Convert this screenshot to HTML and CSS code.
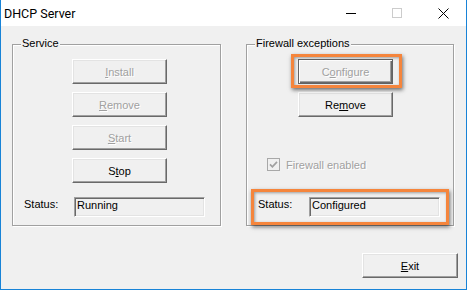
FILE: index.html
```html
<!DOCTYPE html>
<html lang="en">
<head>
    <meta charset="UTF-8">
    <title>DHCP Server</title>
    <link rel="stylesheet" href="styles.css">
</head>
<body>
    <div class="window">
        <div class="titlebar">
            <span class="title">DHCP Server</span>
            <div class="caption-buttons">
                <span class="caption-btn">
                    <svg width="10" height="10" viewBox="0 0 10 10"><path d="M0 5.5H10" stroke="#000" /></svg>
                </span>
                <span class="caption-btn">
                    <svg width="10" height="10" viewBox="0 0 10 10"><rect x="0.5" y="0.5" width="9" height="9" fill="none" stroke="#cccccc" /></svg>
                </span>
                <span class="caption-btn">
                    <svg width="11" height="11" viewBox="0 0 11 11"><path d="M0.5 0.5L10.5 10.5M10.5 0.5L0.5 10.5" stroke="#000" /></svg>
                </span>
            </div>
        </div>

        <div class="client">
            <div class="groups">
                <div class="group group-service">
                    <span class="group-title">Service</span>
                    <div class="group-body">
                        <div class="button-stack">
                            <button class="btn" disabled><u>I</u>nstall</button>
                            <button class="btn" disabled><u>R</u>emove</button>
                            <button class="btn" disabled><u>S</u>tart</button>
                            <button class="btn">S<u>t</u>op</button>
                        </div>
                        <div class="status-row">
                            <span class="status-label">Status:</span>
                            <span class="field">Running</span>
                        </div>
                    </div>
                </div>

                <div class="group group-firewall">
                    <span class="group-title">Firewall exceptions</span>
                    <div class="group-body">
                        <div class="button-stack">
                            <div class="highlight">
                                <button class="btn btn-default" disabled>C<u>o</u>nfigure</button>
                            </div>
                            <button class="btn">Re<u>m</u>ove</button>
                        </div>
                        <div class="checkbox-row">
                            <svg width="13" height="13" viewBox="0 0 13 13">
                                <rect x="0.5" y="0.5" width="12" height="12" fill="#f0f0f0" stroke="#a8a8a8" />
                                <path d="M3 6.3L5.4 8.8L10 3.8" fill="none" stroke="#a0a0a0" stroke-width="1.7" />
                            </svg>
                            <span class="checkbox-label">Firewall enabled</span>
                        </div>
                        <div class="status-row is-highlighted">
                            <span class="status-label">Status:</span>
                            <span class="field">Configured</span>
                        </div>
                    </div>
                </div>
            </div>

            <div class="footer">
                <button class="btn btn-exit"><u>E</u>xit</button>
            </div>
        </div>
    </div>
</body>
</html>
```

FILE: styles.css
```css
body {
    margin: 0;
    font-family: 'Liberation Sans', Arial, sans-serif;
    font-size: 11px;
    color: #000;
}

.window {
    width: 467px;
    height: 290px;
    box-sizing: border-box;
    border: 1px solid #1883d7;
    border-top: none;
    background-color: #f0f0f0;
    display: flex;
    flex-direction: column;
}

.titlebar {
    height: 26px;
    flex-shrink: 0;
    background-color: #fff;
    display: flex;
    align-items: center;
}

.title {
    font-family: 'Roboto', 'Liberation Sans', sans-serif;
    font-size: 12.5px;
    padding-left: 3px;
}

.caption-buttons {
    margin-left: auto;
    height: 100%;
    display: flex;
}

.caption-btn {
    width: 46px;
    display: flex;
    align-items: center;
    justify-content: center;
}

.client {
    flex: 1;
    padding: 18px 8px 0 11px;
    display: flex;
    flex-direction: column;
}

.groups {
    display: flex;
    gap: 25px;
}

.group {
    box-sizing: border-box;
    border: 1px solid #a0a0a0;
    box-shadow: inset 1px 1px 0 #fff, 1px 1px 0 #fff;
    display: flex;
    flex-direction: column;
}

.group-service {
    width: 209px;
}

.group-firewall {
    width: 208px;
}

.group-title {
    align-self: flex-start;
    margin: -8px 0 0 8px;
    padding: 0 1px;
    line-height: 13px;
    background-color: #f0f0f0;
}

.group-body {
    flex: 1;
    padding-top: 9px;
    display: flex;
    flex-direction: column;
}

.button-stack {
    display: flex;
    flex-direction: column;
    align-items: flex-start;
    gap: 8px;
}

.group-service .button-stack {
    margin-left: 59px;
}

.group-firewall .button-stack {
    margin-left: 51px;
}

.btn {
    width: 95px;
    height: 25px;
    box-sizing: border-box;
    padding: 0;
    border: 1px solid;
    border-color: #fff #696969 #696969 #fff;
    box-shadow: inset -1px -1px 0 #a0a0a0, inset 1px 1px 0 #e3e3e3;
    background-color: #f0f0f0;
    font-family: 'Liberation Sans', Arial, sans-serif;
    font-size: 11px;
    color: #000;
}

.btn:disabled {
    color: #a0a0a0;
    text-shadow: 1px 1px 0 #fff;
}

.btn-default {
    border-color: #646464;
    box-shadow: inset 1px 1px 0 #fff, inset -1px -1px 0 #696969, inset -2px -2px 0 #a0a0a0;
}

.btn-exit {
    width: 96px;
}

.highlight {
    position: relative;
    display: flex;
}

/* orange callout drawn over the button */
.highlight::after {
    content: '';
    position: absolute;
    top: -5px;
    left: -7px;
    right: -9px;
    bottom: -4px;
    border: 3px solid #f5853c;
    box-shadow: 1px 2px 4px rgba(0, 0, 0, 0.55), inset 1px 1px 3px rgba(0, 0, 0, 0.35);
    pointer-events: none;
}

.checkbox-row {
    display: flex;
    align-items: center;
    gap: 6px;
    height: 13px;
    margin: 41px 0 0 20px;
}

.checkbox-label {
    color: #a0a0a0;
    text-shadow: 1px 1px 0 #fff;
}

.status-row {
    display: flex;
    align-items: flex-start;
    margin: 6px 4px 0;
    border: 3px solid transparent;
    padding: 5px 5px 5px 4px;
}

.status-row.is-highlighted {
    margin-top: 18px;
    border-color: #f5853c;
    box-shadow: 1px 2px 4px rgba(0, 0, 0, 0.55), inset 1px 1px 3px rgba(0, 0, 0, 0.35);
}

.status-label {
    width: 50px;
    padding-top: 1px;
    line-height: 13px;
}

.is-highlighted .status-label {
    width: 51px;
}

.field {
    width: 131px;
    height: 20px;
    box-sizing: border-box;
    border: 1px solid;
    border-color: #a0a0a0 #fff #fff #a0a0a0;
    box-shadow: inset 1px 1px 0 #696969, inset -1px -1px 0 #e3e3e3;
    padding: 1px 2px 0;
    line-height: 12px;
}

.footer {
    display: flex;
    justify-content: flex-end;
    margin-top: 27px;
}
```
